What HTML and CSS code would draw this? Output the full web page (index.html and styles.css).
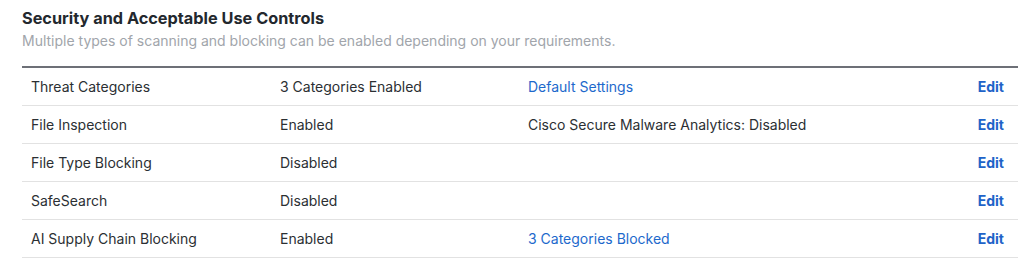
FILE: index.html
```html
<!DOCTYPE html>
<html lang="en">
<head>
  <meta charset="UTF-8">
  <title>Security and Acceptable Use Controls</title>
  <link rel="stylesheet" href="styles.css">
</head>
<body>
  <section class="panel">
    <h2 class="panel-title">Security and Acceptable Use Controls</h2>
    <p class="panel-desc">Multiple types of scanning and blocking can be enabled depending on your requirements.</p>

    <div class="settings">
      <div class="row">
        <span class="cell">Threat Categories</span>
        <span class="cell">3 Categories Enabled</span>
        <span class="cell"><a href="#" class="link">Default Settings</a></span>
        <span class="cell action"><a href="#" class="edit">Edit</a></span>
      </div>
      <div class="row">
        <span class="cell">File Inspection</span>
        <span class="cell">Enabled</span>
        <span class="cell">Cisco Secure Malware Analytics: Disabled</span>
        <span class="cell action"><a href="#" class="edit">Edit</a></span>
      </div>
      <div class="row">
        <span class="cell">File Type Blocking</span>
        <span class="cell">Disabled</span>
        <span class="cell"></span>
        <span class="cell action"><a href="#" class="edit">Edit</a></span>
      </div>
      <div class="row">
        <span class="cell">SafeSearch</span>
        <span class="cell">Disabled</span>
        <span class="cell"></span>
        <span class="cell action"><a href="#" class="edit">Edit</a></span>
      </div>
      <div class="row">
        <span class="cell">AI Supply Chain Blocking</span>
        <span class="cell">Enabled</span>
        <span class="cell"><a href="#" class="link">3 Categories Blocked</a></span>
        <span class="cell action"><a href="#" class="edit">Edit</a></span>
      </div>
    </div>
  </section>
</body>
</html>
```

FILE: styles.css
```css
body {
  margin: 0;
  background-color: #fff;
  font-family: 'Inter', 'Noto Sans', sans-serif;
  color: #2b2f33;
}

.panel {
  padding: 7px 9px 0 22px;
}

.panel-title {
  margin: 0;
  font-size: 16.3px;
  font-weight: 700;
  line-height: 22px;
  color: #23282e;
}

.panel-desc {
  margin: 2px 0 0;
  font-size: 14px;
  line-height: 20px;
  color: #a1a5ab;
}

.settings {
  margin-top: 15px;
  border-top: 2px solid #6d7077;
}

.row {
  display: grid;
  grid-template-columns: 249px 248px 1fr auto;
  height: 37px;
  align-items: center;
  border-bottom: 1px solid #e2e2e2;
  font-size: 14px;
}

.cell {
  padding-left: 9px;
  padding-bottom: 1px;
}

.action {
  text-align: right;
  padding-right: 14px;
}

.link {
  color: #1d69cc;
  text-decoration: none;
}

.edit {
  color: #1e63c8;
  font-weight: 700;
  text-decoration: none;
}
```
